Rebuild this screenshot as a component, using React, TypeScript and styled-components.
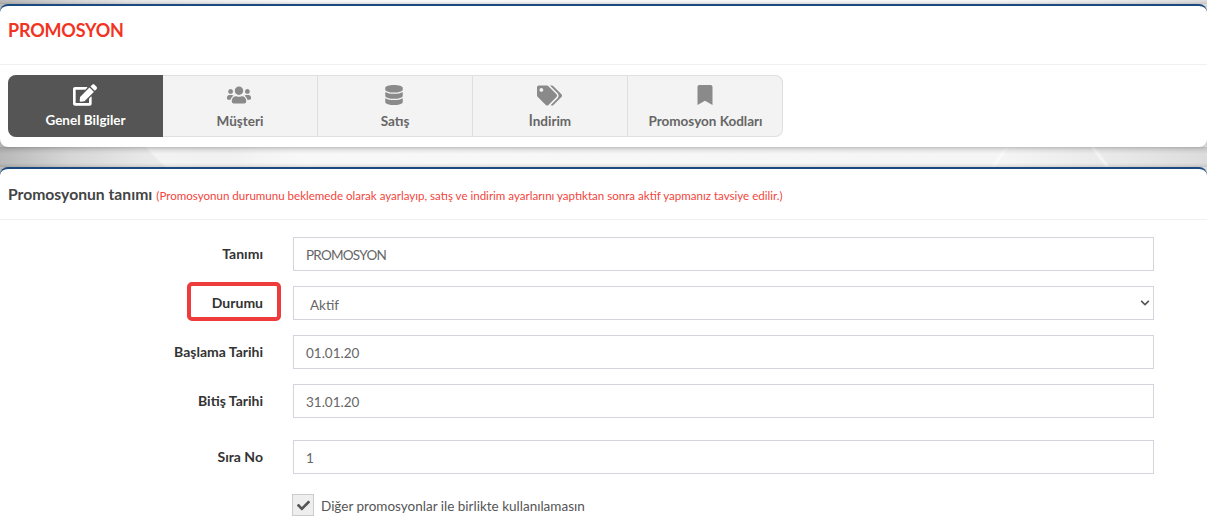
import React from "react";
import styled, { createGlobalStyle } from "styled-components";
import { FaEdit, FaUsers, FaDatabase, FaTags, FaBookmark, FaCheck, FaChevronDown } from "react-icons/fa";

const Global = createGlobalStyle`
  html, body { margin: 0; padding: 0; }
  body { font-family: "Lato", "Noto Sans", sans-serif; background: #fff; overflow: hidden; }
`;

const Page = styled.div`
  width: 1207px;
  height: 529px;
  overflow: hidden;
  padding-top: 4px;
  box-sizing: border-box;
  background:
    linear-gradient(180deg, rgba(0,0,0,.13) 0, rgba(0,0,0,0) 7px) 0 147px / 100% 20px no-repeat,
    linear-gradient(0deg, rgba(0,0,0,.10) 0, rgba(0,0,0,0) 4px) 0 147px / 100% 20px no-repeat,
    linear-gradient(0deg, rgba(0,0,0,.10) 0, rgba(0,0,0,0) 3px) 0 0 / 100% 4px no-repeat,
    linear-gradient(45deg, transparent 0, transparent 116px, rgba(255,255,255,.45) 118px, rgba(255,255,255,0) 175px) 0 147px / 300px 20px no-repeat,
    linear-gradient(125deg, transparent 42%, rgba(255,255,255,.6) 50%, transparent 58%) 986px 147px / 28px 20px no-repeat,
    linear-gradient(53deg, transparent 42%, rgba(255,255,255,.6) 50%, transparent 58%) 1086px 147px / 28px 20px no-repeat,
    linear-gradient(90deg, #b8b8b8 0, #d6d6d6 70px, #e8e8e8 145px, #f8f8f8 300px, #f5f5f5 1000px, #e8e8e8 1120px, #dcdcdc 1207px);
`;

const Card = styled.section`
  background: #fff;
  border-top: 2px solid #1a4a7e;
  border-radius: 8px;
  box-shadow: 0 1px 3px rgba(0, 0, 0, 0.12);
`;

const TopCard = styled(Card)`
  height: 141px;
  margin-bottom: 20px;
`;

const FormCard = styled(Card)`
  border-radius: 8px 8px 0 0;
  height: 400px;
`;

const TitleBar = styled.div`
  height: 59px;
  box-sizing: border-box;
  border-bottom: 1px solid #f0f0f0;
  padding: 12px 8px 0;
`;

const Title = styled.h1`
  margin: 0;
  font-size: 18px;
  line-height: 24px;
  font-weight: 700;
  letter-spacing: -0.2px;
  color: #f2331f;
`;

const Tabs = styled.nav`
  display: flex;
  width: 775px;
  height: 62px;
  margin: 10px 0 0 8px;
  border-radius: 8px;
  background: #f3f3f3;
  box-shadow: inset 0 0 0 1px #dfdfdf;
  overflow: hidden;
`;

const Tab = styled.div<{ $active?: boolean }>`
  width: 155px;
  flex: none;
  display: flex;
  flex-direction: column;
  align-items: center;
  padding-top: 8px;
  box-sizing: border-box;
  background: ${(p) => (p.$active ? "#555" : "transparent")};
  color: ${(p) => (p.$active ? "#fff" : "#666")};
  border-right: ${(p) => (p.$active ? "0" : "1px solid #dfdfdf")};
  font-size: 13.5px;
  font-weight: 700;
  &:last-child { border-right: 0; }
  & svg { color: ${(p) => (p.$active ? "#fff" : "#8a8a8a")}; display: block; }
`;

const TabIcon = styled.span`
  height: 24px;
  margin-right: 2px;
  display: flex;
  align-items: center;
`;

const TabLabel = styled.span<{ $active?: boolean }>`
  margin-top: ${(p) => (p.$active ? "4px" : "5px")};
  line-height: 18px;
`;

const FormHead = styled.div`
  height: 51px;
  box-sizing: border-box;
  border-bottom: 1px solid #f0f0f0;
  padding: 15px 8px 0;
  display: flex;
  align-items: baseline;
  gap: 4px;
`;

const FormTitle = styled.h2`
  margin: 0;
  font-size: 15.7px;
  line-height: 20px;
  font-weight: 700;
  color: #444;
  white-space: nowrap;
`;

const Note = styled.span`
  font-size: 11.55px;
  color: #f2453d;
  white-space: nowrap;
`;

const Form = styled.div`
  padding-top: 17px;
`;

const Row = styled.div<{ $gap: number }>`
  display: grid;
  grid-template-columns: 263px 861px;
  column-gap: 30px;
  align-items: center;
  height: 34px;
  margin-bottom: ${(p) => p.$gap}px;
`;

const LabelBox = styled.div`
  justify-self: end;
  position: relative;
`;

const Label = styled.label`
  display: block;
  text-align: right;
  font-size: 14px;
  line-height: 17px;
  margin-top: -2px;
  font-weight: 700;
  color: #333;
  white-space: nowrap;
`;

const Highlight = styled.span`
  position: absolute;
  left: -25px;
  top: -14px;
  width: 94px;
  height: 39px;
  box-sizing: border-box;
  border: 4px solid #ee3b3b;
  border-radius: 5px;
`;

const Field = styled.div`
  height: 34px;
  box-sizing: border-box;
  border: 1px solid #d3d5dc;
  padding: 2px 12px 0;
  display: flex;
  align-items: center;
  justify-content: space-between;
  font-size: 13.5px;
  color: #666;
`;

const CapsValue = styled.span`
  letter-spacing: -0.75px;
`;

const SelectField = styled(Field)`
  padding: 4px 3px 0 16px;
  & svg { color: #555; margin-top: -4px; }
`;

const CheckRow = styled.div`
  display: flex;
  align-items: center;
  gap: 7px;
  margin: 20px 0 0 292px;
  font-size: 13.5px;
  color: #555;
`;

const CheckText = styled.span`
  padding-top: 2px;
`;

const CheckBox = styled.span`
  width: 22px;
  height: 22px;
  box-sizing: border-box;
  border: 1px solid #ccc;
  background: #eee;
  display: flex;
  align-items: center;
  justify-content: center;
  color: #555;
`;

const tabs = [
  { label: "Genel Bilgiler", icon: <FaEdit size={24} />, active: true },
  { label: "Müşteri", icon: <FaUsers size={24} /> },
  { label: "Satış", icon: <FaDatabase size={20} /> },
  { label: "İndirim", icon: <FaTags size={25} /> },
  { label: "Promosyon Kodları", icon: <FaBookmark size={20} /> },
];

export default function App() {
  return (
    <Page>
      <Global />
      <TopCard>
        <TitleBar>
          <Title>PROMOSYON</Title>
        </TitleBar>
        <Tabs>
          {tabs.map((t) => (
            <Tab key={t.label} $active={t.active}>
              <TabIcon>{t.icon}</TabIcon>
              <TabLabel $active={t.active}>{t.label}</TabLabel>
            </Tab>
          ))}
        </Tabs>
      </TopCard>
      <FormCard>
        <FormHead>
          <FormTitle>Promosyonun tanımı</FormTitle>
          <Note>(Promosyonun durumunu beklemede olarak ayarlayıp, satış ve indirim ayarlarını yaptıktan sonra aktif yapmanız tavsiye edilir.)</Note>
        </FormHead>
        <Form>
          <Row $gap={15}>
            <Label>Tanımı</Label>
            <Field><CapsValue>PROMOSYON</CapsValue></Field>
          </Row>
          <Row $gap={15}>
            <LabelBox>
              <Highlight />
              <Label>Durumu</Label>
            </LabelBox>
            <SelectField>
              Aktif
              <FaChevronDown size={10} />
            </SelectField>
          </Row>
          <Row $gap={15}>
            <Label>Başlama Tarihi</Label>
            <Field>01.01.20</Field>
          </Row>
          <Row $gap={22}>
            <Label>Bitiş Tarihi</Label>
            <Field>31.01.20</Field>
          </Row>
          <Row $gap={0}>
            <Label>Sıra No</Label>
            <Field>1</Field>
          </Row>
          <CheckRow>
            <CheckBox>
              <FaCheck size={13} />
            </CheckBox>
            <CheckText>Diğer promosyonlar ile birlikte kullanılamasın</CheckText>
          </CheckRow>
        </Form>
      </FormCard>
    </Page>
  );
}
